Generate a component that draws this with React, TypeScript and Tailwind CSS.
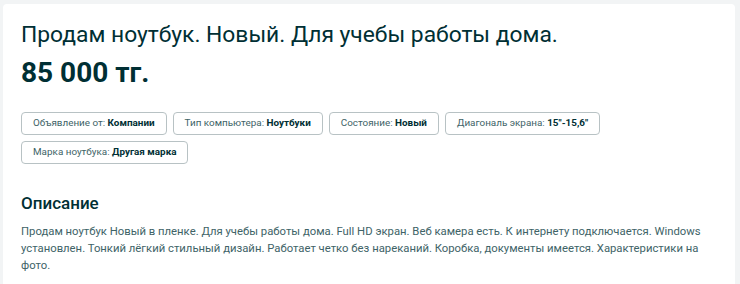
import React from "react";

const tags: [string, string][] = [
  ["Объявление от:", "Компании"],
  ["Тип компьютера:", "Ноутбуки"],
  ["Состояние:", "Новый"],
  ["Диагональ экрана:", "15\"-15,6\""],
  ["Марка ноутбука:", "Другая марка"],
];

export default function App() {
  return (
    <div
      className="w-[740px] h-[284px] overflow-hidden bg-[#f2f4f5] pt-[4px] pl-[3px]"
      style={{ fontFamily: "Roboto, 'Liberation Sans', sans-serif" }}
    >
      <div className="w-[732px] h-[300px] bg-white rounded-[4px] px-[18px] pt-[17px]">
        <h1 className="text-[22.8px] leading-[28px] text-[#002f34] font-normal">
          Продам ноутбук. Новый. Для учебы работы дома.
        </h1>
        <div className="mt-[8px] text-[28px] leading-[32px] font-bold text-[#002f34]">
          85 000 тг.
        </div>
        <div className="mt-[23px] flex flex-wrap gap-x-[6px] gap-y-[6px] w-[620px]">
          {tags.map(([l, v]) => (
            <div
              key={l}
              className="h-[23px] px-[11px] flex items-center border border-[#b8c2c4] rounded-[4px] text-[9.9px] text-[#406367]"
            >
              <span>{l}&nbsp;</span>
              <span className="font-bold text-[#002f34]">{v}</span>
            </div>
          ))}
        </div>
        <h2 className="mt-[27px] text-[17px] leading-[24px] font-medium text-[#002f34]">
          Описание
        </h2>
        <p className="mt-[8px] text-[11.3px] leading-[17px] text-[#406367] w-[690px]">
          Продам ноутбук Новый в пленке. Для учебы работы дома. Full HD экран. Веб камера есть. К
          интернету подключается. Windows установлен. Тонкий лёгкий стильный дизайн. Работает четко
          без нареканий. Коробка, документы имеется. Характеристики на фото.
        </p>
      </div>
    </div>
  );
}
